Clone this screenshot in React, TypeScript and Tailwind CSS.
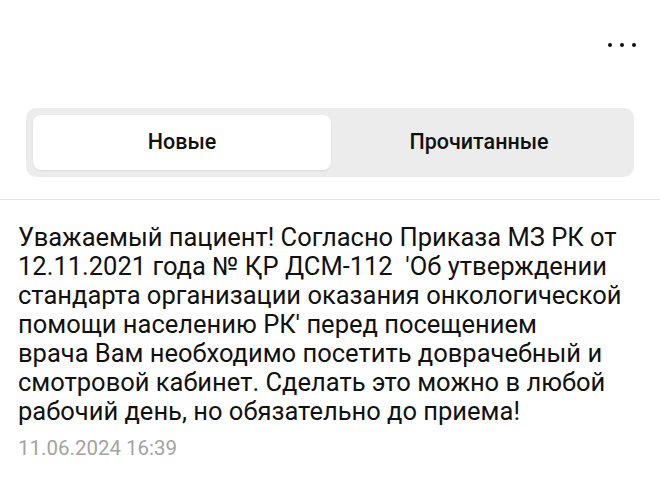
export default function App() {
  return (
    <div className="w-[660px] h-[481px] bg-white overflow-hidden" style={{ fontFamily: "Roboto, 'Noto Sans', sans-serif" }}>
      {/* top bar */}
      <div className="h-[90px] flex items-start justify-end pt-[43px] pr-[24px]">
        <div className="flex gap-[8px]">
          <span className="w-[4px] h-[4px] rounded-full bg-[#111]" />
          <span className="w-[4px] h-[4px] rounded-full bg-[#111]" />
          <span className="w-[4px] h-[4px] rounded-full bg-[#111]" />
        </div>
      </div>

      {/* tabs */}
      <div className="px-[26px] pt-[18px]">
        <div className="h-[69px] rounded-[10px] bg-[#ececec] p-[7px] flex">
          <div className="w-[298px] rounded-[8px] bg-white shadow-[0_1px_2px_rgba(0,0,0,0.08)] flex items-center justify-center text-[21.5px] font-medium text-[#111]">
            Новые
          </div>
          <div className="flex-1 flex items-center justify-center text-[21.5px] font-medium text-[#111]">
            Прочитанные
          </div>
        </div>
      </div>

      <div className="mt-[22px] h-px bg-[#e6e6e6]" />

      {/* message */}
      <div className="px-[18px] pt-[23px]">
        <p className="text-[25.5px] leading-[29px] text-[#111] whitespace-nowrap">
          Уважаемый пациент! Согласно Приказа МЗ РК от<br />
          12.11.2021 года № ҚР ДСМ-112&nbsp; 'Об утверждении<br />
          стандарта организации оказания онкологической<br />
          помощи населению РК' перед посещением<br />
          врача Вам необходимо посетить доврачебный и<br />
          смотровой кабинет. Сделать это можно в любой<br />
          рабочий день, но обязательно до приема!
        </p>
        <p className="mt-[10px] text-[20.5px] leading-[24px] text-[#a3a3a3]">11.06.2024 16:39</p>
      </div>
    </div>
  );
}
